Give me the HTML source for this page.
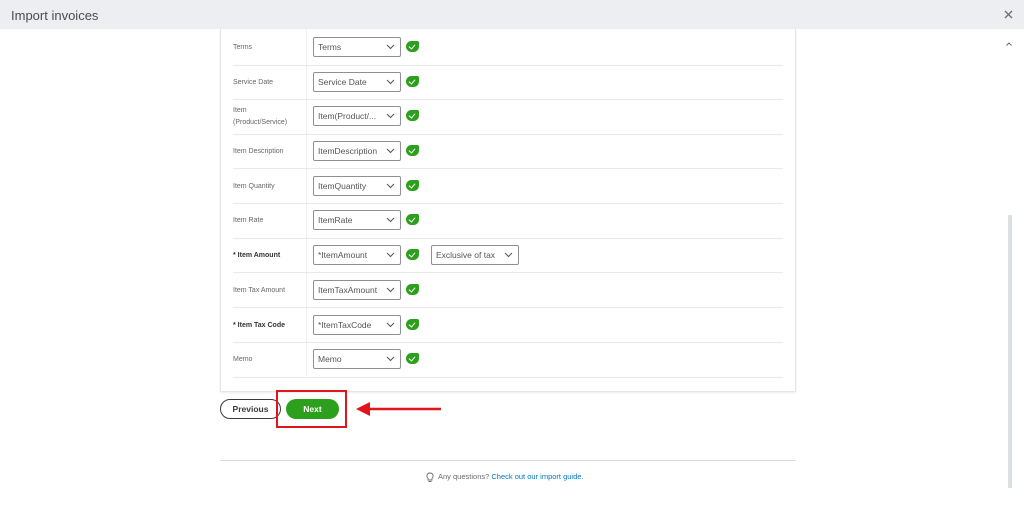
<!DOCTYPE html>
<html><head><meta charset="utf-8"><style>
*{margin:0;padding:0;box-sizing:border-box}
body{width:1024px;height:505px;overflow:hidden;background:#fff;font-family:"Liberation Sans",sans-serif;position:relative}
.hdr{position:absolute;left:0;top:0;width:1024px;height:29px;background:#eceef1}
.hdr .t{position:absolute;left:11px;top:8px;font-size:13px;color:#4a4b50}
.card{position:absolute;left:220px;top:29px;width:576px;height:363px;border:1px solid #e4e4e6;border-top:none;box-shadow:0 1px 2px rgba(0,0,0,.08)}
.vline{position:absolute;left:306px;top:29px;width:1px;height:349px;background:#f0f0f0}
.sep{position:absolute;left:233px;width:550px;height:1px;background:#e9e9eb}
.lab{position:absolute;left:233px;font-size:7px;color:#666;line-height:12px}
.lab b{font-weight:bold;color:#333}
.sel{position:absolute;left:313px;width:88px;height:20px;border:1px solid #8d9096;border-radius:2px;font-size:8.5px;color:#555;padding:4px 0 0 4px;white-space:nowrap;overflow:hidden;background:#fff}
.sel svg{position:absolute;right:5px;top:6px}
.chk{position:absolute;left:406px;width:13px;height:11px;background:#2ca01c;border-radius:6px 2px 6px 6px}
.chk:after{content:"";position:absolute;left:4px;top:2px;width:3px;height:5px;border:solid #fff;border-width:0 1.5px 1.5px 0;transform:rotate(40deg)}
.btn{position:absolute;top:399px;height:20px;border-radius:10px;font-size:8.5px;font-weight:bold;text-align:center;line-height:18px}
.scroll{position:absolute;left:1008px;top:215px;width:4px;height:273px;background:#dde0e2}
</style></head><body>
<div class="hdr"><div class="t">Import invoices</div>
<svg style="position:absolute;left:1004px;top:10px" width="9" height="9"><path d="M1 1L8 8M8 1L1 8" stroke="#6b6c72" stroke-width="1.3"/></svg></div>
<div class="card"></div>
<div class="vline"></div>

<div class="lab" style="top:42px">Terms</div>
<div class="sel" style="top:37px">Terms<svg width="9" height="6"><path d="M1 1l3.5 3.5L8 1" stroke="#555" fill="none"/></svg></div>
<div class="chk" style="top:41px"></div>
<div class="sep" style="top:65px"></div>

<div class="lab" style="top:77px">Service Date</div>
<div class="sel" style="top:72px">Service Date<svg width="9" height="6"><path d="M1 1l3.5 3.5L8 1" stroke="#555" fill="none"/></svg></div>
<div class="chk" style="top:76px"></div>
<div class="sep" style="top:99px"></div>

<div class="lab" style="top:105px">Item<br>(Product/Service)</div>
<div class="sel" style="top:106px">Item(Product/...<svg width="9" height="6"><path d="M1 1l3.5 3.5L8 1" stroke="#555" fill="none"/></svg></div>
<div class="chk" style="top:110px"></div>
<div class="sep" style="top:134px"></div>

<div class="lab" style="top:146px">Item Description</div>
<div class="sel" style="top:141px">ItemDescription<svg width="9" height="6"><path d="M1 1l3.5 3.5L8 1" stroke="#555" fill="none"/></svg></div>
<div class="chk" style="top:145px"></div>
<div class="sep" style="top:168px"></div>

<div class="lab" style="top:181px">Item Quantity</div>
<div class="sel" style="top:176px">ItemQuantity<svg width="9" height="6"><path d="M1 1l3.5 3.5L8 1" stroke="#555" fill="none"/></svg></div>
<div class="chk" style="top:180px"></div>
<div class="sep" style="top:203px"></div>

<div class="lab" style="top:215px">Item Rate</div>
<div class="sel" style="top:210px">ItemRate<svg width="9" height="6"><path d="M1 1l3.5 3.5L8 1" stroke="#555" fill="none"/></svg></div>
<div class="chk" style="top:214px"></div>
<div class="sep" style="top:238px"></div>

<div class="lab" style="top:250px"><b>* Item Amount</b></div>
<div class="sel" style="top:245px">*ItemAmount<svg width="9" height="6"><path d="M1 1l3.5 3.5L8 1" stroke="#555" fill="none"/></svg></div>
<div class="chk" style="top:249px"></div>
<div class="sel" style="top:245px;left:431px">Exclusive of tax<svg width="9" height="6"><path d="M1 1l3.5 3.5L8 1" stroke="#555" fill="none"/></svg></div>
<div class="sep" style="top:272px"></div>

<div class="lab" style="top:285px">Item Tax Amount</div>
<div class="sel" style="top:280px">ItemTaxAmount<svg width="9" height="6"><path d="M1 1l3.5 3.5L8 1" stroke="#555" fill="none"/></svg></div>
<div class="chk" style="top:284px"></div>
<div class="sep" style="top:307px"></div>

<div class="lab" style="top:320px"><b>* Item Tax Code</b></div>
<div class="sel" style="top:315px">*ItemTaxCode<svg width="9" height="6"><path d="M1 1l3.5 3.5L8 1" stroke="#555" fill="none"/></svg></div>
<div class="chk" style="top:319px"></div>
<div class="sep" style="top:342px"></div>

<div class="lab" style="top:354px">Memo</div>
<div class="sel" style="top:349px">Memo<svg width="9" height="6"><path d="M1 1l3.5 3.5L8 1" stroke="#555" fill="none"/></svg></div>
<div class="chk" style="top:353px"></div>
<div class="sep" style="top:377px"></div>

<div class="btn" style="left:220px;width:61px;border:1.5px solid #393a3d;color:#393a3d">Previous</div>
<div class="btn" style="left:286px;width:53px;background:#2ca01c;color:#fff;line-height:20px">Next</div>
<div style="position:absolute;left:276px;top:390px;width:71px;height:38px;border:2px solid #e0161b"></div>
<svg style="position:absolute;left:354px;top:400px" width="90" height="18"><path d="M14 9H87" stroke="#e0161b" stroke-width="2.5"/><path d="M2 9L16 2V16Z" fill="#e0161b"/></svg>

<div style="position:absolute;left:220px;top:460px;width:576px;height:1px;background:#dcdcde"></div>
<svg style="position:absolute;left:426px;top:472px" width="8" height="11"><path d="M4 1a3 3 0 0 0-2 5.3V8h4V6.3A3 3 0 0 0 4 1zM2.5 9.5h3" stroke="#6b6c72" fill="none" stroke-width="0.9"/></svg>
<div style="position:absolute;left:438px;top:472px;font-size:7.5px;color:#6b6c72">Any questions? <span style="color:#0077c5">Check out our import guide.</span></div>

<svg style="position:absolute;left:1006px;top:42px" width="6" height="4"><path d="M0.5 3.5L3 1L5.5 3.5" stroke="#6b6c72" fill="none"/></svg>
<div class="scroll"></div>
</body></html>
